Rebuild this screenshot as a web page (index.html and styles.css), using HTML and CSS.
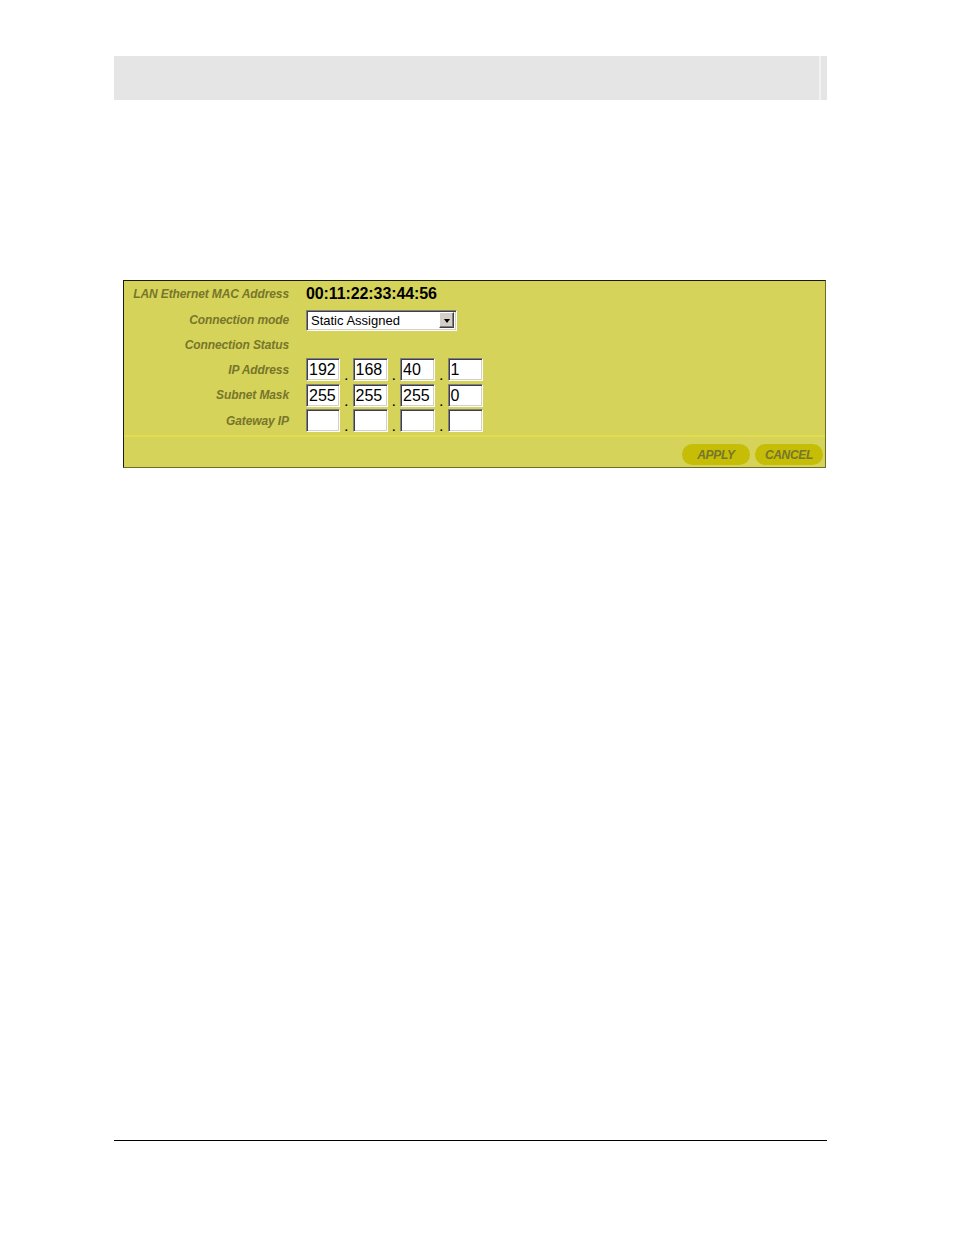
FILE: index.html
```html
<!DOCTYPE html>
<html>
<head>
<meta charset="utf-8">
<link rel="stylesheet" href="styles.css">
</head>
<body>
<div class="page">
  <div class="header">
    <div class="header-main"></div>
    <div class="header-rule"></div>
    <div class="header-end"></div>
  </div>

  <div class="panel">
    <div class="rows">
      <div class="row row-mac">
        <div class="label">LAN Ethernet MAC Address</div>
        <div class="value mac">00:11:22:33:44:56</div>
      </div>
      <div class="row row-mode">
        <div class="label">Connection mode</div>
        <div class="value">
          <div class="select">
            <span class="select-text">Static Assigned</span>
            <span class="select-btn"><span class="tri"></span></span>
          </div>
        </div>
      </div>
      <div class="row row-status">
        <div class="label">Connection Status</div>
        <div class="value"></div>
      </div>
      <div class="row row-ip">
        <div class="label">IP Address</div>
        <div class="value ip">
          <span class="box">192</span><span class="dot">.</span><span class="box">168</span><span class="dot">.</span><span class="box">40</span><span class="dot">.</span><span class="box">1</span>
        </div>
      </div>
      <div class="row row-ip">
        <div class="label">Subnet Mask</div>
        <div class="value ip">
          <span class="box">255</span><span class="dot">.</span><span class="box">255</span><span class="dot">.</span><span class="box">255</span><span class="dot">.</span><span class="box">0</span>
        </div>
      </div>
      <div class="row row-ip">
        <div class="label">Gateway IP</div>
        <div class="value ip">
          <span class="box"></span><span class="dot">.</span><span class="box"></span><span class="dot">.</span><span class="box"></span><span class="dot">.</span><span class="box"></span>
        </div>
      </div>
    </div>
    <div class="sep"></div>
    <div class="actions">
      <span class="btn">APPLY</span>
      <span class="btn">CANCEL</span>
    </div>
  </div>

  <div class="footer-rule"></div>
</div>
</body>
</html>
```
FILE: styles.css
```css
html, body {
  margin: 0;
  padding: 0;
  background: #ffffff;
}

.page {
  width: 713px;
  margin-left: 114px;
  padding-top: 56px;
  font-family: "Liberation Sans", Arial, sans-serif;
}

.header {
  display: flex;
  height: 44px;
  background: #e5e5e5;
}

.header-main {
  width: 705px;
}

.header-rule {
  width: 2px;
  background: #f2f2f2;
}

.header-end {
  flex: 1;
}

.panel {
  margin-top: 180px;
  margin-left: 9px;
  width: 701px;
  background: #d6d35b;
  border-top: 1px solid #1a1a10;
  border-left: 1px solid #1a1a10;
  border-right: 1px solid #6e6c25;
  border-bottom: 1px solid #6e6c25;
}

.rows {
  display: flex;
  flex-direction: column;
}

.row {
  display: flex;
  align-items: center;
}

.row-mac { height: 26px; }
.row-mode { height: 26px; }
.row-status { height: 24px; }
.row-ip { height: 25.5px; }

.label {
  width: 165px;
  text-align: right;
  font-size: 12px;
  font-weight: bold;
  font-style: italic;
  color: #77762a;
  letter-spacing: -0.1px;
}

.value {
  margin-left: 17px;
  display: flex;
  align-items: center;
}

.mac {
  font-size: 16px;
  font-weight: bold;
  color: #000;
  letter-spacing: -0.1px;
}

.select {
  box-sizing: border-box;
  width: 151px;
  height: 21px;
  background: #fff;
  border: 1px solid;
  border-color: #808080 #ffffff #ffffff #808080;
  box-shadow: inset 1px 1px 0 #404040, inset -1px -1px 0 #d4d0c8;
  display: flex;
  align-items: center;
  justify-content: space-between;
  padding: 2px 2px 2px 4px;
}

.select-text {
  font-size: 13px;
  color: #000;
}

.select-btn {
  box-sizing: border-box;
  width: 15px;
  height: 16px;
  background: #d4d0c8;
  border: 1px solid;
  border-color: #ffffff #404040 #404040 #ffffff;
  box-shadow: inset -1px -1px 0 #808080;
  display: flex;
  align-items: center;
  justify-content: center;
}

.tri {
  width: 0;
  height: 0;
  border-left: 3.5px solid transparent;
  border-right: 3.5px solid transparent;
  border-top: 4px solid #000;
  margin-top: 1px;
}

.ip {
  align-items: flex-end;
}

.box {
  box-sizing: border-box;
  width: 35px;
  height: 23px;
  background: #fff;
  border: 1px solid;
  border-color: #808080 #ffffff #ffffff #808080;
  box-shadow: inset 1px 1px 0 #404040, inset -1px -1px 0 #d4d0c8;
  font-size: 16px;
  line-height: 21px;
  padding-left: 2px;
  color: #000;
  overflow: hidden;
}

.ip .box:first-child {
  width: 34px;
}

.dot {
  width: 12.5px;
  text-align: center;
  font-size: 11px;
  line-height: 10px;
  font-weight: bold;
  color: #000;
  padding-bottom: 0;
}

.sep {
  margin-top: 1px;
  height: 2px;
  background: #e2de4b;
}

.actions {
  display: flex;
  justify-content: flex-end;
  gap: 5px;
  padding: 7.5px 2px 2px 0;
}

.btn {
  width: 68px;
  height: 21px;
  border-radius: 11px;
  background: #c5bd06;
  color: #77762c;
  font-size: 12px;
  font-weight: bold;
  font-style: italic;
  display: flex;
  align-items: center;
  justify-content: center;
  letter-spacing: -0.3px;
}

.footer-rule {
  margin-top: 672px;
  height: 1px;
  background: #000;
}
```
